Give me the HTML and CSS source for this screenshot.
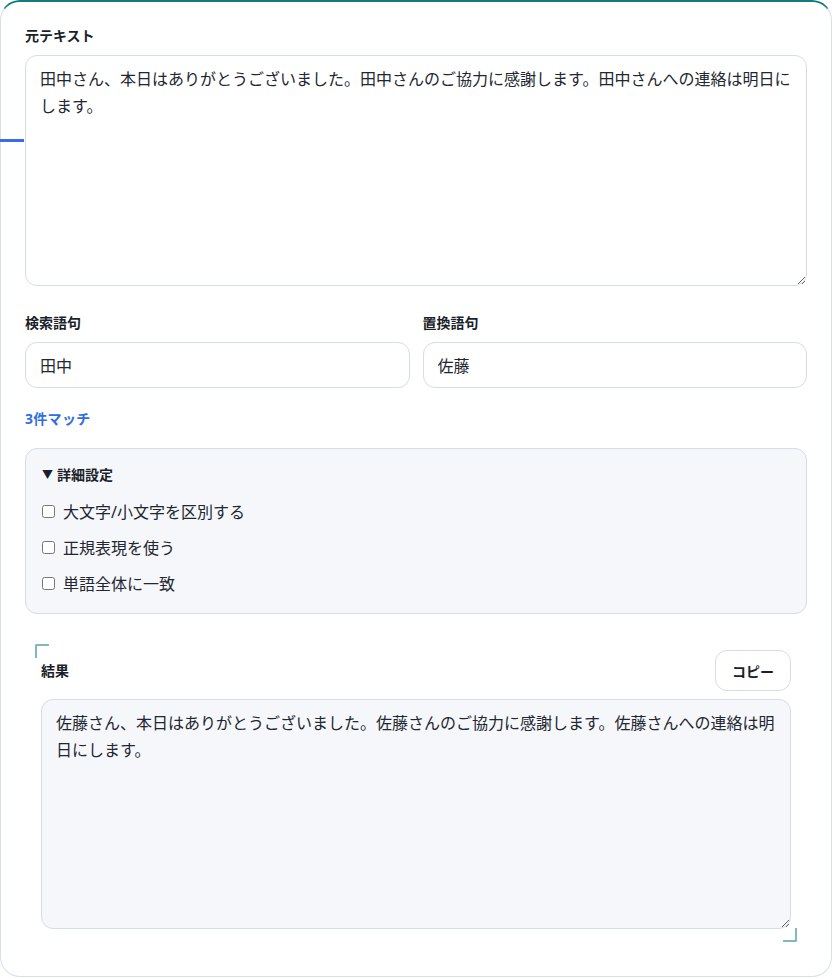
FILE: index.html
```html
<!DOCTYPE html>
<html lang="ja">
<head>
<meta charset="utf-8">
<title>テキスト置換</title>
<link rel="stylesheet" href="styles.css">
</head>
<body>
<div class="card">
  <div class="accent-bar"></div>
  <div class="field">
    <label class="label" for="src">元テキスト</label>
    <textarea id="src" class="textarea source">田中さん、本日はありがとうございました。田中さんのご協力に感謝します。田中さんへの連絡は明日にします。</textarea>
  </div>
  <div class="pair">
    <div class="field">
      <label class="label" for="find">検索語句</label>
      <input id="find" class="input" type="text" value="田中">
    </div>
    <div class="field">
      <label class="label" for="repl">置換語句</label>
      <input id="repl" class="input" type="text" value="佐藤">
    </div>
  </div>
  <div class="match">3件マッチ</div>
  <details class="advanced" open>
    <summary class="summary"><span class="tri">▼</span>詳細設定</summary>
    <label class="opt"><input type="checkbox" class="check"><span>大文字/小文字を区別する</span></label>
    <label class="opt"><input type="checkbox" class="check"><span>正規表現を使う</span></label>
    <label class="opt"><input type="checkbox" class="check"><span>単語全体に一致</span></label>
  </details>
  <div class="result">
    <span class="corner corner-tl"></span>
    <span class="corner corner-br"></span>
    <div class="result-head">
      <span class="label">結果</span>
      <button class="copy" type="button">コピー</button>
    </div>
    <textarea class="textarea output" readonly>佐藤さん、本日はありがとうございました。佐藤さんのご協力に感謝します。佐藤さんへの連絡は明日にします。</textarea>
  </div>
</div>
</body>
</html>
```

FILE: styles.css
```css
* { box-sizing: border-box; }

html, body {
  margin: 0;
  padding: 0;
  background: #ffffff;
}

body {
  font-family: "Noto Sans", "Noto Sans CJK JP", sans-serif;
  color: #1f2330;
}

.card {
  position: relative;
  width: 832px;
  background: #ffffff;
  border: 1px solid #d9dfe7;
  border-top: 2px solid #137b7c;
  border-radius: 20px;
  padding: 24px 24px 24px;
}

.accent-bar {
  position: absolute;
  left: -1px;
  top: 137px;
  width: 24px;
  height: 3px;
  background: #3a6ce6;
}

.field {
  display: flex;
  flex-direction: column;
  min-width: 0;
}

.label {
  font-size: 14px;
  font-weight: 700;
  line-height: 20px;
  color: #1b1f2a;
  margin-bottom: 9px;
}

.textarea {
  display: block;
  width: 100%;
  font-family: "Noto Sans", "Noto Sans CJK JP", sans-serif;
  font-size: 16px;
  line-height: 27px;
  color: #222630;
  border: 1px solid #d5dde6;
  border-radius: 12px;
  padding: 10px 14px;
  resize: vertical;
  outline: none;
}

.source {
  height: 231px;
  background: #ffffff;
}

.pair {
  display: grid;
  grid-template-columns: 1fr 1fr;
  gap: 13px;
  margin-top: 27px;
}

.input {
  height: 46px;
  width: 100%;
  font-family: "Noto Sans", "Noto Sans CJK JP", sans-serif;
  font-size: 16px;
  color: #222630;
  border: 1px solid #d5dde6;
  border-radius: 12px;
  padding: 0 14px;
  background: #ffffff;
  outline: none;
}

.match {
  margin-top: 21px;
  font-size: 14px;
  font-weight: 700;
  line-height: 20px;
  color: #2f6de3;
  letter-spacing: 0.3px;
}

.advanced {
  margin-top: 19px;
  background: #f5f7fa;
  border: 1px solid #d5dde6;
  border-radius: 12px;
  padding: 16px 16px 18px;
}

.summary {
  list-style: none;
  font-size: 14px;
  font-weight: 700;
  line-height: 20px;
  color: #1b1f2a;
  cursor: pointer;
  margin-bottom: 13px;
}

.summary::-webkit-details-marker { display: none; }

.tri {
  font-size: 11px;
  margin-right: 4px;
  position: relative;
  top: -1px;
}

.opt {
  display: flex;
  align-items: center;
  height: 24px;
  font-size: 16px;
  color: #222630;
}

.opt + .opt {
  margin-top: 12px;
}

.check {
  margin: 0 8px 0 0;
  width: 13px;
  height: 13px;
}

.result {
  position: relative;
  margin: 30px 10px 10px;
  padding: 6px 6px 13px;
}

.corner {
  position: absolute;
  width: 14px;
  height: 14px;
  border-color: #7fb9be;
  border-style: solid;
}

.corner-tl {
  top: 0;
  left: 0;
  border-width: 2px 0 0 2px;
  border-top-left-radius: 2px;
}

.corner-br {
  bottom: 0;
  right: 0;
  border-width: 0 2px 2px 0;
  border-bottom-right-radius: 2px;
}

.result-head {
  display: flex;
  align-items: center;
  justify-content: space-between;
  height: 41px;
  margin-bottom: 8px;
}

.result-head .label {
  margin-bottom: 0;
}

.copy {
  height: 41px;
  width: 76px;
  background: #ffffff;
  border: 1px solid #d5dde6;
  border-radius: 12px;
  font-family: "Noto Sans", "Noto Sans CJK JP", sans-serif;
  font-size: 14px;
  font-weight: 700;
  color: #1b1f2a;
  cursor: pointer;
}

.output {
  height: 230px;
  background: #f5f7fa;
}
```
